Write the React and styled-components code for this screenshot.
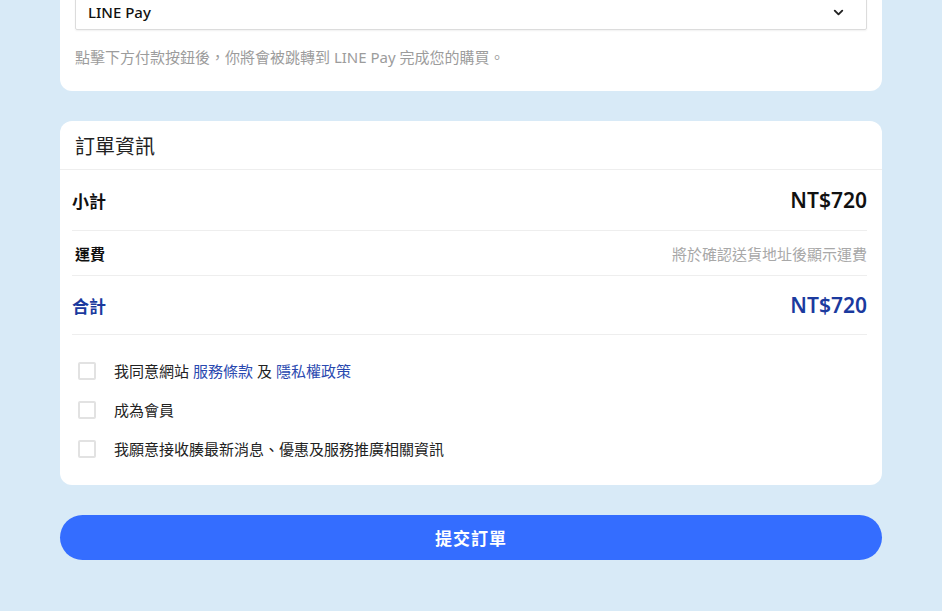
import React from 'react'
import styled, { createGlobalStyle } from 'styled-components'
import { ChevronDown } from 'lucide-react'

const GlobalStyle = createGlobalStyle`
  html, body {
    margin: 0;
    padding: 0;
    background: #d8eaf7;
    font-family: "Noto Sans", "Noto Sans CJK TC", sans-serif;
    color: #222;
    overflow: hidden;
  }
`

const Page = styled.div`
  width: 822px;
  margin: 0 auto;
  padding-bottom: 50px;
  display: flex;
  flex-direction: column;
  gap: 30px;
`

const Card = styled.div`
  background: #fff;
  border-radius: 12px;
  ${props => props.top && 'margin-top: -22px; border-radius: 0 0 12px 12px;'}
`

const PayBody = styled.div`
  padding: 16px 15px 24px;
`

const Select = styled.div`
  height: 36px;
  box-sizing: border-box;
  border: 1px solid #dcdcdc;
  border-radius: 2px;
  display: flex;
  align-items: center;
  justify-content: space-between;
  padding: 0 12px;
  font-size: 15px;
  font-weight: 500;
  color: #111;
  box-shadow: 0 1px 2px rgba(0, 0, 0, 0.06);
`

const Hint = styled.p`
  margin: 17px 0 0;
  font-size: 15px;
  line-height: 20px;
  color: #9c9c9c;
`

const CardHeader = styled.div`
  height: 48px;
  display: flex;
  align-items: center;
  padding: 0 15px;
  border-bottom: 1px solid #eeeeee;
  font-size: 20px;
  color: #222;
`

const Rows = styled.div`
  padding: 0 15px 0 12px;
`

const Row = styled.div`
  height: ${props => props.h}px;
  display: flex;
  align-items: center;
  justify-content: space-between;
  border-bottom: 1px solid #eeeeee;
  color: ${props => (props.total ? '#1b3a9e' : '#111')};
`

const Label = styled.span`
  font-size: ${props => (props.small ? '15px' : '17px')};
  font-weight: 700;
  padding-left: ${props => (props.small ? '3px' : '0')};
`

const Price = styled.span`
  font-size: 21px;
  font-weight: 600;
`

const Note = styled.span`
  font-size: 15px;
  color: #a8a8a8;
`

const Checks = styled.div`
  padding: 16px 15px 17px 18px;
  display: flex;
  flex-direction: column;
`

const CheckRow = styled.label`
  height: 39px;
  display: flex;
  align-items: center;
  gap: 18px;
  font-size: 15px;
  color: #222;
`

const Box = styled.span`
  width: 18px;
  height: 18px;
  box-sizing: border-box;
  border: 2px solid #e2e2e2;
  border-radius: 2px;
  flex-shrink: 0;
`

const Link = styled.a`
  color: #2a49b0;
  text-decoration: none;
  margin: 0 4px;
`

const SubmitButton = styled.button`
  height: 45px;
  border: none;
  border-radius: 23px;
  background: #346dff;
  color: #fff;
  font-family: inherit;
  font-size: 17px;
  font-weight: 700;
  letter-spacing: 1px;
`

export default () => (
  <>
    <GlobalStyle />
    <Page>
      <Card top>
        <PayBody>
          <Select>
            LINE Pay
            <ChevronDown size={15} strokeWidth={3} color="#222" style={{ marginRight: 8 }} />
          </Select>
          <Hint>點擊下方付款按鈕後，你將會被跳轉到 LINE Pay 完成您的購買。</Hint>
        </PayBody>
      </Card>
      <Card>
        <CardHeader>訂單資訊</CardHeader>
        <Rows>
          <Row h={60}>
            <Label>小計</Label>
            <Price>NT$720</Price>
          </Row>
          <Row h={44}>
            <Label small>運費</Label>
            <Note>將於確認送貨地址後顯示運費</Note>
          </Row>
          <Row h={58} total>
            <Label>合計</Label>
            <Price>NT$720</Price>
          </Row>
        </Rows>
        <Checks>
          <CheckRow>
            <Box />
            <span>
              我同意網站<Link>服務條款</Link>及<Link>隱私權政策</Link>
            </span>
          </CheckRow>
          <CheckRow>
            <Box />
            <span>成為會員</span>
          </CheckRow>
          <CheckRow>
            <Box />
            <span>我願意接收腠最新消息、優惠及服務推廣相關資訊</span>
          </CheckRow>
        </Checks>
      </Card>
      <SubmitButton>提交訂單</SubmitButton>
    </Page>
  </>
)
